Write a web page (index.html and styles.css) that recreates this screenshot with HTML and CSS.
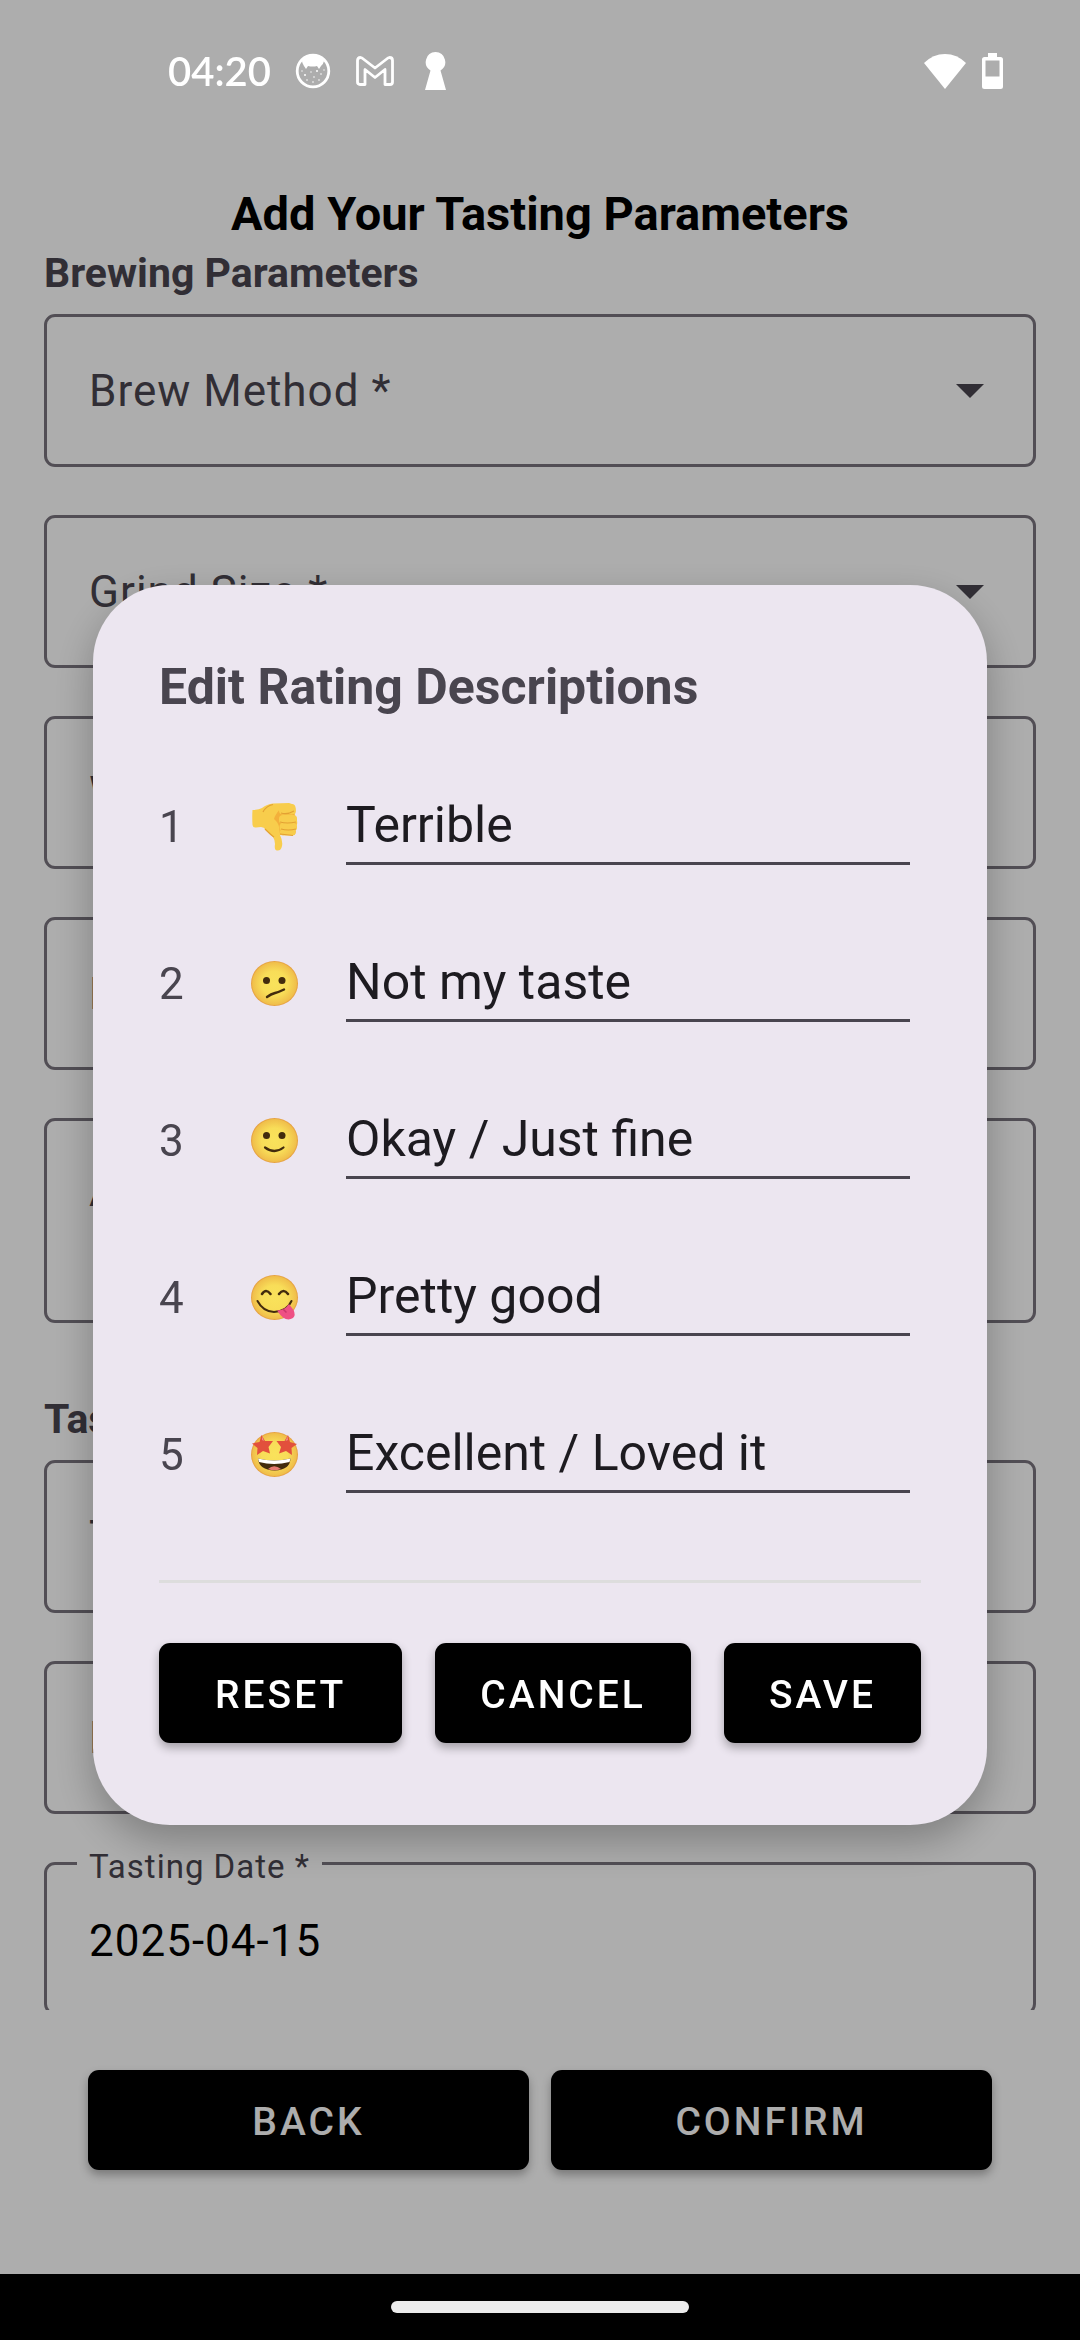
FILE: index.html
```html
<!DOCTYPE html>
<html lang="en">
<head>
<meta charset="utf-8">
<meta name="viewport" content="width=device-width, initial-scale=1">
<title>Add Your Tasting Parameters</title>
<link rel="stylesheet" href="styles.css">
</head>
<body>
<header class="status-bar">
  <span class="clock">04:20</span>
  <svg class="status-icon" width="36" height="36" viewBox="0 0 36 36" aria-hidden="true">
    <circle cx="18" cy="18" r="15.800" fill="none" stroke="#fff" stroke-width="2.800"/>
    <path d="M8 5Q18 0 28 5L29 8Q28 12 26 13L24 16L22 13Q18 14 13 13L11 16L9 13Q7 10 7 8Z" fill="#fff"/>
    <g fill="#fff"><circle cx="10" cy="22" r="1"/><circle cx="22" cy="18" r="1"/><circle cx="16" cy="19" r=".7"/><circle cx="12" cy="27" r=".8"/><circle cx="19" cy="24" r=".8"/><circle cx="26" cy="21" r=".8"/><circle cx="24" cy="27" r=".8"/><circle cx="18" cy="29" r=".8"/><circle cx="7" cy="18" r=".7"/><circle cx="29" cy="17" r=".7"/></g>
  </svg>
  <svg class="status-icon" width="40" height="32" viewBox="0 0 40 32" aria-hidden="true">
    <path d="M2.500 5.500Q2.500 2.500 5.500 2.500L7 3L20 13L33 3L34.500 2.500Q37.500 2.500 37.500 5.500V27Q37.500 29.500 35 29.500H30V14.500L20 22.500L10 14.500V29.500H5Q2.500 29.500 2.500 27Z" fill="none" stroke="#fff" stroke-width="2.800" stroke-linejoin="round"/>
  </svg>
  <svg class="status-icon keyhole" width="21" height="38" viewBox="0 0 21 38" aria-hidden="true">
    <path d="M10.500 0A10 10 0 0 1 15.500 18.500L21 38H0L5.500 18.500A10 10 0 0 1 10.500 0Z" fill="#fff"/>
  </svg>
  <svg class="wifi" width="42" height="35" viewBox="0 0 42 35" aria-hidden="true"><path d="M0 9Q9 0 21 0T42 9L21 35Z" fill="#fff"/></svg>
  <svg width="21" height="36" viewBox="0 0 21 36" aria-hidden="true"><path fill-rule="evenodd" d="M6 0H15V4H18.500Q21 4 21 6.500V33.500Q21 36 18.500 36H2.500Q0 36 0 33.500V6.500Q0 4 2.500 4H6ZM3.500 7.500V23.500H17.500V7.500Z" fill="#fff"/></svg>
</header>

<main class="app">
  <h1 class="page-title">Add Your Tasting Parameters</h1>
  <form class="form" id="tasting">
    <h2 class="section-title">Brewing Parameters</h2>
    <div class="fields">
      <div class="select-box">
        <select class="field" aria-label="Brew Method"><option>Brew Method *</option></select>
        <svg class="caret" width="28" height="14" viewBox="0 0 28 14" aria-hidden="true"><path d="M0 0H28L14 14Z" fill="#49454f"/></svg>
      </div>
      <div class="select-box">
        <select class="field" aria-label="Grind Size"><option>Grind Size *</option></select>
        <svg class="caret" width="28" height="14" viewBox="0 0 28 14" aria-hidden="true"><path d="M0 0H28L14 14Z" fill="#49454f"/></svg>
      </div>
      <input class="field" type="text" aria-label="Water" placeholder="Water *">
      <input class="field" type="text" aria-label="Ratio" placeholder="Ratio">
      <textarea class="field notes" aria-label="Additional Notes" placeholder="Additional Notes"></textarea>
    </div>
    <h2 class="section-title later">Tasting Parameters</h2>
    <div class="fields">
      <input class="field" type="text" aria-label="Taste" placeholder="Taste *">
      <input class="field" type="text" aria-label="Rating" placeholder="Rating *">
      <div class="date-box">
        <label class="float-label" for="date">Tasting Date *</label>
        <input class="field date" id="date" type="text" value="2025-04-15">
      </div>
    </div>
  </form>
  <div class="page-actions">
    <button class="btn" type="button">BACK</button>
    <button class="btn" type="submit" form="tasting">CONFIRM</button>
  </div>
</main>
<footer class="nav-bar"><span class="nav-pill"></span></footer>

<div class="scrim">
  <form class="dialog" role="dialog" aria-labelledby="dialog-title">
    <h2 class="dialog-title" id="dialog-title">Edit Rating Descriptions</h2>
    <div class="ratings">
      <div class="rating">
        <label for="r1">1</label>
        <svg class="emoji" width="48" height="48" viewBox="0 0 48 48" aria-hidden="true">
          <path d="M1.500 7Q1 14 1.500 22Q2 25 5 24.500L10 24Q13 24 15 27Q19 32 22 34Q24 37 24 41Q23 47 26 47.500Q30 48 31 43Q32 38 29 32L42 32Q45 31 44.500 27.500Q46.500 26 45.500 22.500Q47 20 45.500 16Q46 13 43.500 12Q46 8 44 4Q43 1 38 0L22 .5Q16 1 11 5Q8 7 1.500 7Z" fill="#f8cd4c"/>
          <path d="M29 6Q24 12 23 16Q27 19 28 24L29 31L43 32Q45 31 44.500 27.500L30 26V22L45 23L45.500 19L30 18V13L44 14L43.500 11L30 11Q27 8 31 1Z" fill="#f3b03b"/>
          <g fill="#f8cd4c"><rect x="28" y="1" width="16.500" height="10.500" rx="4"/><rect x="28" y="12" width="18" height="9" rx="4"/><rect x="28.500" y="20" width="17.500" height="8" rx="4"/><rect x="29" y="26" width="15.500" height="6.500" rx="3"/></g>
          <path d="M12 9Q15 3 22 1.500M30 10Q36 12 43 8M29 19Q36 21 45 19M30 26Q37 28 45 26M29 31L42 32.500M14 26Q20 32 23 34" fill="none" stroke="#e3a133" stroke-width="1.200"/>
        </svg>
        <input class="desc" id="r1" type="text" value="Terrible">
      </div>
      <div class="rating">
        <label for="r2">2</label>
        <svg class="emoji" width="48" height="48" viewBox="0 0 48 48" aria-hidden="true">
          <defs><radialGradient id="face"><stop offset="0" stop-color="#f9e25b"/><stop offset=".55" stop-color="#f8dd58"/><stop offset=".93" stop-color="#f0bf4b"/><stop offset="1" stop-color="#e3983c"/></radialGradient></defs>
          <ellipse cx="23.500" cy="23.500" rx="23.500" ry="22.500" fill="url(#face)"/>
          <circle cx="15.500" cy="20.500" r="3.500" fill="#422b0d"/><circle cx="31" cy="20.500" r="3.500" fill="#422b0d"/>
          <path d="M16 37Q20 34 24 33T33 29.500" fill="none" stroke="#422b0d" stroke-width="2.400" stroke-linecap="round"/>
        </svg>
        <input class="desc" id="r2" type="text" value="Not my taste">
      </div>
      <div class="rating">
        <label for="r3">3</label>
        <svg class="emoji" width="48" height="48" viewBox="0 0 48 48" aria-hidden="true">
          <ellipse cx="23.500" cy="23.500" rx="23.500" ry="22.500" fill="url(#face)"/>
          <circle cx="15.500" cy="18.500" r="3.500" fill="#422b0d"/><circle cx="31" cy="18.500" r="3.500" fill="#422b0d"/>
          <path d="M14 30.500Q23.500 37.500 32.500 30.500" fill="none" stroke="#422b0d" stroke-width="2.200" stroke-linecap="round"/>
        </svg>
        <input class="desc" id="r3" type="text" value="Okay / Just fine">
      </div>
      <div class="rating">
        <label for="r4">4</label>
        <svg class="emoji" width="48" height="48" viewBox="0 0 48 48" aria-hidden="true">
          <ellipse cx="23.500" cy="23.500" rx="23.500" ry="22.500" fill="url(#face)"/>
          <path d="M11 20Q15 14 19.500 20M28 20Q32.500 14 37 20" fill="none" stroke="#422b0d" stroke-width="2.600" stroke-linecap="round"/>
          <path d="M6.500 27Q12 37.500 23 38Q36 37.500 40.500 27" fill="none" stroke="#422b0d" stroke-width="2" stroke-linecap="round"/>
          <path d="M26 36.500Q34 36 38 30L42.500 36Q45 41 42 44Q37 47 32 43.500Q29 41 26 36.500Z" fill="#ee5084"/>
          <path d="M32 35L35.500 38.500" stroke="#c9356b" stroke-width="1.500"/>
        </svg>
        <input class="desc" id="r4" type="text" value="Pretty good">
      </div>
      <div class="rating">
        <label for="r5">5</label>
        <svg class="emoji" width="48" height="48" viewBox="0 0 48 48" aria-hidden="true">
          <ellipse cx="23.500" cy="23.500" rx="23.500" ry="22.500" fill="url(#face)"/>
          <path d="M7 27.500Q23 31.500 39.500 27.500Q39 39 23.500 39.500Q8 39 7 27.500Z" fill="#422b0d"/>
          <path d="M7 27.500Q23 31.500 39.500 27.500L38.500 31Q23 35 8 31Z" fill="#fff"/>
          <path d="M17 38Q23 32.500 30 38Q23 40.500 17 38Z" fill="#e67a72"/>
          <path d="M10.500 4L14 10L22 10L17.500 16L19 22.500L12 20L6 24L6.500 17L1 12.500L8.500 11Z" fill="#e2503c"/>
          <path d="M37 4L33.500 10L25.500 10L30 16L28 22.500L35 20L41 24L40.500 17L46 13L39 11Z" fill="#e2503c"/>
          <path d="M11 5L13 10L11 9ZM36.500 5L34.500 10L37 9Z" fill="#ef8f83"/>
        </svg>
        <input class="desc" id="r5" type="text" value="Excellent / Loved it">
      </div>
    </div>
    <hr class="divider">
    <div class="dialog-actions">
      <button class="btn grow" type="reset">RESET</button>
      <button class="btn" type="button">CANCEL</button>
      <button class="btn" type="submit">SAVE</button>
    </div>
  </form>
</div>
</body>
</html>
```
FILE: styles.css
```css
* { box-sizing: border-box; }

body {
  margin: 0;
  height: 100vh;
  display: flex;
  flex-direction: column;
  background: #fff;
  color: #000;
  font-family: Roboto, "Noto Sans", sans-serif;
  font-size: 44px;
}

h1, h2 { margin: 0; font-weight: 700; }

input, select, textarea, button { font: inherit; color: inherit; }

/* System bars stay above the scrim */
.status-bar {
  position: relative;
  z-index: 2;
  flex: none;
  display: flex;
  align-items: center;
  height: 136px;
  padding: 6px 77px 0 168px;
  color: #fff;
}
.clock {
  font-family: Lato, sans-serif;
  font-size: 40px;
  font-weight: 600;
  line-height: 48px;
}
.status-icon { margin-left: 24px; }
.keyhole { margin-left: 30px; }
.wifi { margin-left: auto; margin-right: 16px; }

.nav-bar {
  position: relative;
  z-index: 2;
  flex: none;
  display: flex;
  align-items: center;
  justify-content: center;
  height: 66px;
  background: #000;
}
.nav-pill {
  width: 298px;
  height: 12px;
  border-radius: 6px;
  background: #ececec;
}

/* Tasting form */
.app {
  flex: 1;
  min-height: 0;
  display: flex;
  flex-direction: column;
}
.page-title {
  flex: none;
  padding-top: 51px;
  font-size: 47px;
  line-height: 54px;
  text-align: center;
}
.form {
  flex: 1;
  min-height: 0;
  overflow: hidden;
  padding: 0 44px;
  margin-top: 8px;
}
.section-title {
  padding-bottom: 17px;
  color: #49454f;
  font-size: 41px;
  line-height: 48px;
}
.later { margin-top: 72px; }
.fields {
  display: flex;
  flex-direction: column;
  gap: 48px;
}
.field {
  display: block;
  width: 100%;
  height: 153px;
  margin: 0;
  padding: 0 42px;
  border: 3px solid #79747e;
  border-radius: 11px;
  background: transparent;
  color: #49454f;
  line-height: 52px;
  letter-spacing: 1px;
  appearance: none;
  outline: 0;
  resize: none;
}
.field::placeholder { color: #49454f; opacity: 1; }
.notes { height: 205px; padding-top: 44px; }
.select-box, .date-box { position: relative; }
.caret {
  position: absolute;
  top: 70px;
  right: 52px;
}
.float-label {
  position: absolute;
  top: -17px;
  left: 33px;
  padding: 0 12px;
  background: #fff;
  color: #49454f;
  font-size: 33px;
  line-height: 44px;
  letter-spacing: 1px;
}
.date { color: #000; padding-top: 4px; }

.page-actions {
  flex: none;
  display: grid;
  grid-template-columns: 1fr 1fr;
  gap: 22px;
  padding: 60px 88px 104px;
}
.btn {
  height: 100px;
  padding: 3px 45px 0;
  border: 0;
  border-radius: 11px;
  background: #000;
  color: #fff;
  font-size: 39px;
  font-weight: 500;
  letter-spacing: 3px;
  box-shadow: 0 5px 10px rgba(0, 0, 0, .3);
}

/* Rating dialog */
.scrim {
  position: fixed;
  inset: 0;
  z-index: 1;
  display: flex;
  align-items: center;
  padding: 136px 93px 66px;
  background: rgba(0, 0, 0, .32);
}
.dialog {
  flex: 1;
  padding: 73px 66px 82px;
  border-radius: 77px;
  background: #ece6f0;
  box-shadow: 0 16px 40px rgba(0, 0, 0, .27);
}
.dialog-title {
  color: #49454f;
  font-size: 50px;
  line-height: 58px;
}
.ratings {
  display: flex;
  flex-direction: column;
  gap: 88px;
  margin: 80px 11px 87px 0;
}
.rating {
  display: grid;
  grid-template-columns: 92px 95px 1fr;
  align-items: baseline;
  color: #49454f;
}
.emoji { align-self: start; margin-top: 7px; }
.desc {
  width: 100%;
  height: 69px;
  padding: 0 0 8px;
  border: 0;
  border-bottom: 3px solid #49454f;
  background: transparent;
  color: #1d1b20;
  font-size: 50px;
  outline: 0;
}
.divider {
  height: 3px;
  margin: 0 0 60px;
  border: 0;
  background: #ddd;
}
.dialog-actions { display: flex; gap: 33px; }
.grow { flex: 1; }
```
